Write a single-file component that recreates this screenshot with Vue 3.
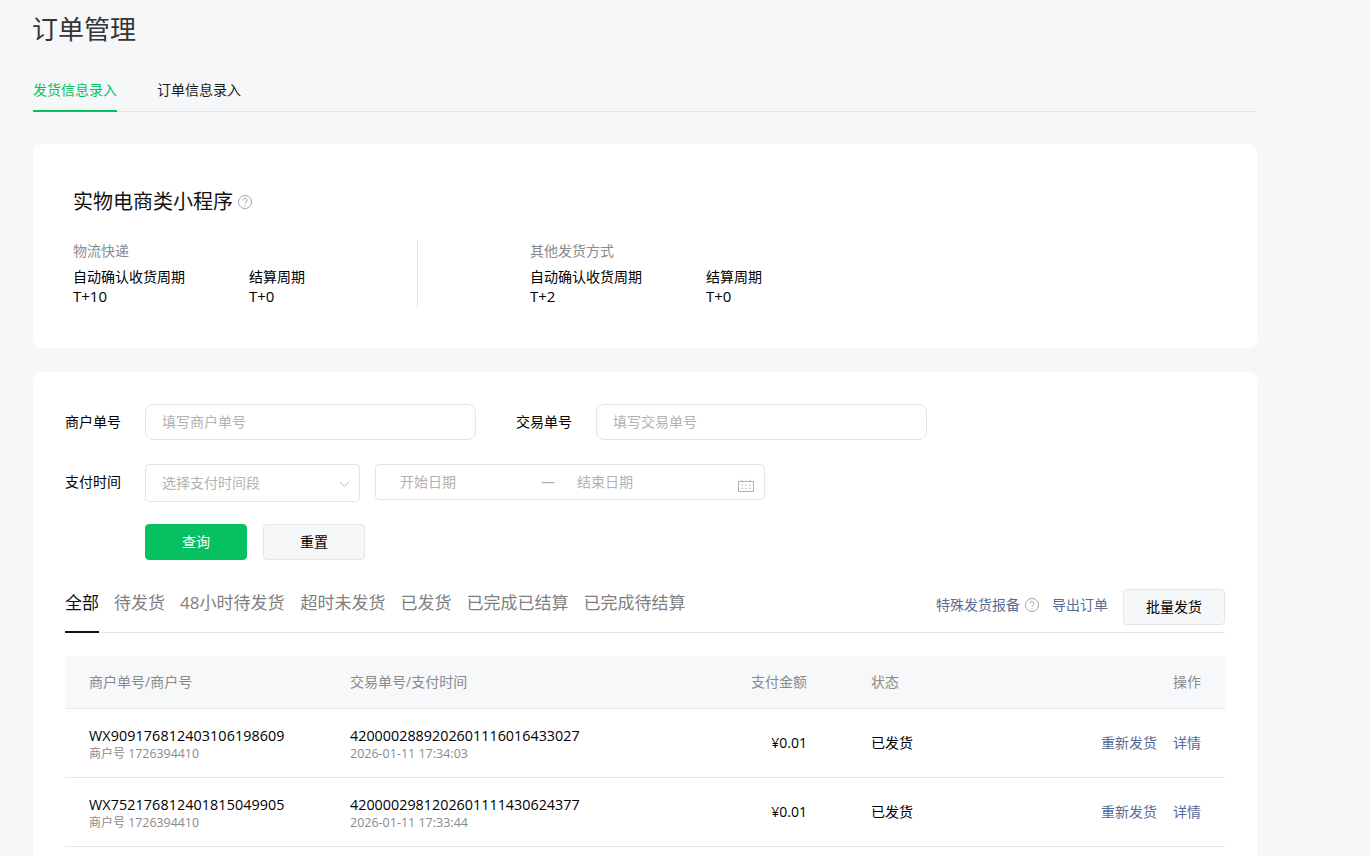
<script setup>
const tabs = ['全部', '待发货', '48小时待发货', '超时未发货', '已发货', '已完成已结算', '已完成待结算']
const rows = [
  { no: 'WX909176812403106198609', tx: '4200002889202601116016433027', time: '2026-01-11 17:34:03' },
  { no: 'WX752176812401815049905', tx: '4200002981202601111430624377', time: '2026-01-11 17:33:44' },
]
const groups = [
  { name: '物流快递', days: 'T+10' },
  { name: '其他发货方式', days: 'T+2' },
]
</script>

<template>
  <div class="page">
    <h1 class="title">订单管理</h1>
    <div class="nav">
      <span class="nav-item active">发货信息录入</span>
      <span class="nav-item">订单信息录入</span>
    </div>

    <section class="card info">
      <h2 class="info-title">实物电商类小程序
        <svg class="help" viewBox="0 0 14 14"><circle cx="7" cy="7" r="6.5" /><path d="M5 5.4a2 2 0 1 1 3 1.7c-.7.4-1 .8-1 1.5" /><path d="M7 9.9v1.1" /></svg>
      </h2>
      <div class="groups">
        <div v-for="g in groups" :key="g.name" class="group">
          <div class="group-name">{{ g.name }}</div>
          <div class="group-cols">
            <div class="col"><div>自动确认收货周期</div><div class="val">{{ g.days }}</div></div>
            <div class="col"><div>结算周期</div><div class="val">T+0</div></div>
          </div>
        </div>
      </div>
    </section>

    <section class="card main">
      <div class="form-row first">
        <label class="label">商户单号</label>
        <div class="input">填写商户单号</div>
        <label class="label second">交易单号</label>
        <div class="input">填写交易单号</div>
      </div>
      <div class="form-row time">
        <label class="label">支付时间</label>
        <div class="select">选择支付时间段
          <svg class="chev" viewBox="0 0 12 7"><path d="M1 1l5 5 5-5" /></svg>
        </div>
        <div class="range">
          <span class="start">开始日期</span>
          <span class="dash">—</span>
          <span>结束日期</span>
          <svg class="cal" viewBox="0 0 16 13"><path d="M.5 2.5h15v10H.5z" /><path d="M4 .5v2M12 .5v2" /><path d="M3.5 6h1.6M7.2 6h1.6M10.9 6h1.6M3.5 9.3h1.6M7.2 9.3h1.6M10.9 9.3h1.6" /></svg>
        </div>
      </div>
      <div class="actions">
        <button class="btn primary">查询</button>
        <button class="btn">重置</button>
      </div>

      <div class="status-bar">
        <div class="status-tabs">
          <span v-for="(t, i) in tabs" :key="t" class="status-tab" :class="{ on: i === 0 }">{{ t }}</span>
        </div>
        <div class="tools">
          <a class="link">特殊发货报备</a>
          <svg class="help tool-help" viewBox="0 0 14 14"><circle cx="7" cy="7" r="6.5" /><path d="M5 5.4a2 2 0 1 1 3 1.7c-.7.4-1 .8-1 1.5" /><path d="M7 9.9v1.1" /></svg>
          <a class="link export">导出订单</a>
          <button class="btn batch">批量发货</button>
        </div>
      </div>

      <div class="table">
        <div class="tr head">
          <div class="c1">商户单号/商户号</div>
          <div class="c2">交易单号/支付时间</div>
          <div class="c3">支付金额</div>
          <div class="c4">状态</div>
          <div class="c5">操作</div>
        </div>
        <div v-for="r in rows" :key="r.no" class="tr body">
          <div class="c1"><div class="num wx">{{ r.no }}</div><div class="sub">商户号 <span class="sub-num">1726394410</span></div></div>
          <div class="c2"><div class="num">{{ r.tx }}</div><div class="sub"><span class="sub-time">{{ r.time }}</span></div></div>
          <div class="c3">¥0.01</div>
          <div class="c4">已发货</div>
          <div class="c5"><a class="link">重新发货</a><a class="link detail">详情</a></div>
        </div>
        <div class="tr body"></div>
      </div>
    </section>
  </div>
</template>

<style>
html, body { margin: 0; height: 856px; overflow: hidden; background: #f6f7f9; }
</style>

<style scoped>
.page {
  width: 1224px;
  margin-left: 33px;
  font: 14px/20px "Open Sans", "Noto Sans CJK SC", sans-serif;
  color: #000;
  height: 856px;
  overflow: hidden;
}
.title { margin: 0 0 0 -1px; padding-top: 11px; font-size: 26px; line-height: 36px; font-weight: 400; color: #353535; }
.nav { display: flex; gap: 40px; height: 65px; border-bottom: 1px solid #e3e4e6; align-items: flex-end; box-sizing: border-box; }
.nav-item { height: 38px; box-sizing: border-box; padding-top: 6px; line-height: 20px; color: #1a1a1a; margin-bottom: -1px; }
.nav-item.active { color: #07c160; border-bottom: 2px solid #07c160; }
.card { background: #fff; border-radius: 8px; }
.info { height: 204px; margin-top: 32px; padding: 40px; box-sizing: border-box; }
.info-title { margin: 0; font-size: 20px; line-height: 34px; font-weight: 400; display: flex; align-items: center; gap: 5px; color: #111; position: relative; top: 1px; }
.help { width: 14px; height: 14px; fill: none; stroke: #a3a3a3; stroke-width: 1; }
.groups { display: flex; margin-top: 22px; }
.group { width: 345px; height: 68px; margin-right: 112px; border-right: 1px solid #e6e6e6; box-sizing: border-box; flex: none; }
.group:last-child { border-right: 0; }
.group-name { color: #8a8a8a; line-height: 22px; }
.group-cols { display: flex; margin-top: 5px; }
.col { width: 176px; line-height: 19px; flex: none; }
.col .val { line-height: 21px; font-size: 15px; }
.main { margin-top: 24px; height: 600px; padding: 32px; box-sizing: border-box; }
.form-row { display: flex; align-items: flex-start; }
.label { width: 80px; flex: none; line-height: 36px; }
.label.second { margin-left: 40px; }
.input { width: 331px; height: 36px; box-sizing: border-box; border: 1px solid #e4e5e7; border-radius: 8px; padding: 0 16px; line-height: 34px; color: #b2b2b2; }
.time { margin-top: 24px; }
.select { position: relative; width: 215px; height: 38px; box-sizing: border-box; border: 1px solid #e4e5e7; border-radius: 4px; padding: 0 16px; line-height: 35px; color: #b2b2b2; }
.chev { position: absolute; right: 9px; top: 16px; width: 11px; height: 6.4px; fill: none; stroke: #b2b2b2; stroke-width: 1; }
.range { position: relative; margin-left: 15px; width: 390px; height: 36px; box-sizing: border-box; border: 1px solid #e4e5e7; border-radius: 4px; padding-left: 24px; display: flex; align-items: center; color: #b2b2b2; }
.start { width: 141px; }
.dash { width: 36px; }
.cal { position: absolute; right: 10px; top: 14px; width: 16px; height: 13px; fill: none; stroke: #b2b2b2; stroke-width: 1; }
.actions { display: flex; gap: 16px; margin: 22px 0 0 80px; }
.btn { width: 102px; height: 36px; box-sizing: border-box; border: 1px solid #e4e5e7; border-radius: 4px; background: #f6f7f9; color: #000; font: inherit; padding: 0; }
.btn.primary { background: #07c160; border-color: #07c160; color: #fff; }
.status-bar { display: flex; justify-content: space-between; height: 73px; border-bottom: 1px solid #e4e5e7; box-sizing: border-box; }
.status-tabs { display: flex; gap: 15px; padding-top: 29px; }
.status-tab { font-size: 17px; line-height: 28px; color: #7f7f7f; height: 44px; box-sizing: border-box; }
.status-tab:nth-child(3) { padding-right: 1px; }
.status-tab.on { color: #111; border-bottom: 2px solid #111; }
.tools { display: flex; align-items: flex-start; padding-top: 29px; }
.link { color: #576b95; }
.tools .link { line-height: 32px; }
.tool-help { margin: 9px 0 0 5px; }
.export { margin-left: 13px; }
.batch { margin-left: 15px; }
.table { margin-top: 23px; }
.tr { display: flex; align-items: center; padding: 0 24px; border-bottom: 1px solid #e9e9ea; box-sizing: border-box; }
.head { height: 53px; background: #f7f8fa; color: #8a8a8a; }
.body { height: 69px; }
.c1 { width: 261px; flex: none; }
.c2 { width: 341px; flex: none; }
.c3 { width: 116px; flex: none; text-align: right; }
.c4 { width: 64px; flex: none; margin-left: 64px; }
.c5 { flex: 1; text-align: right; }
.num { font-size: 14.35px; line-height: 21px; }
.wx { letter-spacing: .08px; }
.sub { font-size: 12px; line-height: 16px; color: #8a8a8a; }
.sub-num { font-size: 12.4px; }
.sub-time { font-size: 12.5px; }
.detail { margin-left: 16px; }
</style>
